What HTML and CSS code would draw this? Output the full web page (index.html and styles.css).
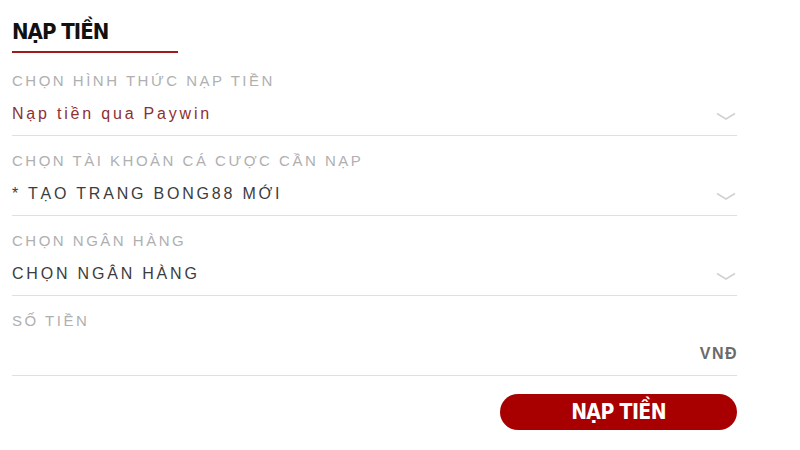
FILE: index.html
```html
<!DOCTYPE html>
<html lang="vi">
<head>
    <meta charset="UTF-8">
    <meta name="viewport" content="width=device-width, initial-scale=1.0">
    <title>Nạp tiền</title>
    <link rel="stylesheet" href="styles.css">
</head>
<body>
    <div class="deposit">
        <h2 class="deposit-title">NẠP TIỀN</h2>

        <div class="field">
            <div class="field-label">CHỌN HÌNH THỨC NẠP TIỀN</div>
            <div class="field-value">
                <span class="value-text highlight">Nạp tiền qua Paywin</span>
                <svg class="chevron" width="20" height="9" viewBox="0 0 20 9"><path d="M1 1.5 L10 7 L19 1.5" fill="none" stroke="#d2d2d2" stroke-width="1.6"/></svg>
            </div>
        </div>

        <div class="field">
            <div class="field-label">CHỌN TÀI KHOẢN CÁ CƯỢC CẦN NẠP</div>
            <div class="field-value">
                <span class="value-text">* TẠO TRANG BONG88 MỚI</span>
                <svg class="chevron" width="20" height="9" viewBox="0 0 20 9"><path d="M1 1.5 L10 7 L19 1.5" fill="none" stroke="#d2d2d2" stroke-width="1.6"/></svg>
            </div>
        </div>

        <div class="field">
            <div class="field-label">CHỌN NGÂN HÀNG</div>
            <div class="field-value">
                <span class="value-text">CHỌN NGÂN HÀNG</span>
                <svg class="chevron" width="20" height="9" viewBox="0 0 20 9"><path d="M1 1.5 L10 7 L19 1.5" fill="none" stroke="#d2d2d2" stroke-width="1.6"/></svg>
            </div>
        </div>

        <div class="field">
            <div class="field-label">SỐ TIỀN</div>
            <div class="field-value amount">
                <span class="currency">VNĐ</span>
            </div>
        </div>

        <div class="actions">
            <button class="submit-btn">NẠP TIỀN</button>
        </div>
    </div>
</body>
</html>
```

FILE: styles.css
```css
body {
    margin: 0;
    background: #fff;
    font-family: "Liberation Sans", Arial, sans-serif;
}
.deposit {
    width: 725px;
    padding-left: 12px;
}
.deposit-title {
    display: inline-block;
    width: 166px;
    margin: 0 0 3px 0;
    padding: 17px 0 4px 0;
    border-bottom: 2px solid #a01c1c;
    font-family: "Liberation Sans Narrow", "DejaVu Sans Condensed", sans-serif;
    font-size: 22px;
    line-height: 30px;
    letter-spacing: -1px;
    font-weight: bold;
    color: #111;
}
.field {
    padding: 15px 0 10px 0;
    border-bottom: 1px solid #e0e0e0;
}
.field-label {
    font-size: 15px;
    line-height: 20px;
    letter-spacing: 2.5px;
    color: #b0b0b0;
    margin-bottom: 12px;
}
.field-value {
    display: flex;
    justify-content: space-between;
    align-items: center;
    height: 22px;
}
.value-text {
    font-size: 16px;
    line-height: 24px;
    letter-spacing: 2.8px;
    color: #3c3c3c;
}
.value-text.highlight {
    color: #8e3030;
}
.chevron {
    margin-right: 1px;
    margin-top: 4px;
}
.field-value.amount {
    justify-content: flex-end;
}
.currency {
    font-size: 16px;
    letter-spacing: 1.5px;
    margin-right: -1px;
    font-weight: bold;
    color: #6a6a6a;
}
.actions {
    display: flex;
    justify-content: flex-end;
    margin-top: 18px;
}
.submit-btn {
    width: 237px;
    height: 36px;
    border: none;
    border-radius: 18px;
    background: #a80000;
    color: #fff;
    font-family: "Liberation Sans Narrow", "DejaVu Sans Condensed", sans-serif;
    font-size: 21px;
    letter-spacing: -0.6px;
    font-weight: bold;
    cursor: pointer;
}
```
